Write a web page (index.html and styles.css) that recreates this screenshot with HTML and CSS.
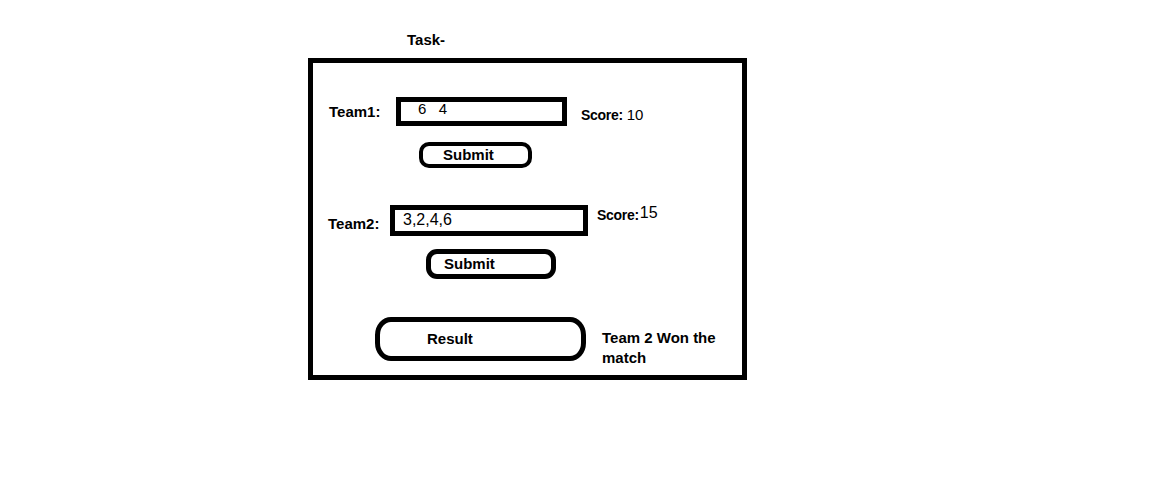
FILE: index.html
```html
<!DOCTYPE html>
<html lang="en">
<head>
    <meta charset="UTF-8">
    <meta name="viewport" content="width=device-width, initial-scale=1.0">
    <title>Task</title>
    <link rel="stylesheet" href="styles.css">
</head>
<body>
    <p class="task-title">Task-</p>
    <div class="frame">
        <div class="row row-team1">
            <span class="label label-team1">Team1:</span>
            <div class="field field-team1"><span>6   4</span></div>
            <div class="score score-team1">
                <span class="score-label">Score:</span>
                <span class="score-value">10</span>
            </div>
        </div>
        <div class="row row-submit1">
            <button class="btn btn-submit1">Submit</button>
        </div>
        <div class="row row-team2">
            <span class="label label-team2">Team2:</span>
            <div class="field field-team2"><span>3,2,4,6</span></div>
            <div class="score score-team2">
                <span class="score-label">Score:</span>
                <span class="score-value">15</span>
            </div>
        </div>
        <div class="row row-submit2">
            <button class="btn btn-submit2">Submit</button>
        </div>
        <div class="row row-result">
            <button class="btn btn-result">Result</button>
            <p class="winner">Team 2 Won the match</p>
        </div>
    </div>
</body>
</html>
```

FILE: styles.css
```css
* {
    margin: 0;
    padding: 0;
    box-sizing: border-box;
    font-family: "Liberation Sans", Arial, sans-serif;
    color: #000;
}

body {
    background: #fff;
    width: 1166px;
    height: 487px;
}

.task-title {
    margin: 31px 0 0 407px;
    font-size: 15px;
    font-weight: bold;
    line-height: 18px;
}

.frame {
    margin: 9px 0 0 308px;
    width: 439px;
    height: 322px;
    border: 5px solid #000;
    padding-top: 34px;
}

.row {
    display: flex;
    align-items: flex-start;
}

.label {
    font-size: 15px;
    font-weight: bold;
    line-height: 18px;
}

.field {
    border: 5px solid #000;
    font-size: 15px;
    line-height: 16px;
    white-space: pre;
}

.score {
    display: flex;
    align-items: flex-start;
    line-height: 18px;
}

.score-label {
    font-size: 14px;
    font-weight: bold;
    letter-spacing: -0.3px;
}

.score-value {
    font-size: 15px;
    margin-left: 4px;
}

.btn {
    background: #fff;
    border: 5px solid #000;
    font-size: 15px;
    font-weight: bold;
    line-height: 18px;
    text-align: left;
}

/* team 1 */
.label-team1 {
    width: 67px;
    margin: 6px 0 0 16px;
}

.field-team1 {
    width: 171px;
    height: 29px;
    padding-left: 17px;
}

.field-team1 span {
    display: block;
    margin-top: -1px;
}

.score-team1 {
    margin: 9px 0 0 14px;
}

.score-team1 .score-value {
    margin-top: 0;
}

.row-submit1 {
    margin-top: 16px;
}

.btn-submit1 {
    margin-left: 106px;
    width: 113px;
    height: 26px;
    border-width: 4px;
    border-radius: 10px;
    padding-left: 20px;
}

/* team 2 */
.row-team2 {
    margin-top: 37px;
}

.label-team2 {
    width: 62px;
    margin: 10px 0 0 15px;
}

.field-team2 {
    width: 198px;
    height: 31px;
    padding: 1px 0 0 8px;
    font-size: 16px;
    line-height: 18px;
}

.score-team2 {
    margin: 1px 0 0 9px;
}

.score-team2 .score-value {
    font-size: 16px;
    margin: -2px 0 0 1px;
}

.row-submit2 {
    margin-top: 13px;
}

.btn-submit2 {
    margin-left: 113px;
    width: 130px;
    height: 30px;
    border-radius: 11px;
    padding-left: 13px;
}

/* result */
.row-result {
    margin-top: 38px;
}

.btn-result {
    margin-left: 62px;
    width: 211px;
    height: 44px;
    border-radius: 16px / 18px;
    padding-left: 47px;
}

.winner {
    width: 130px;
    margin: 11px 0 0 16px;
    font-size: 15px;
    font-weight: bold;
    line-height: 20px;
}
```
